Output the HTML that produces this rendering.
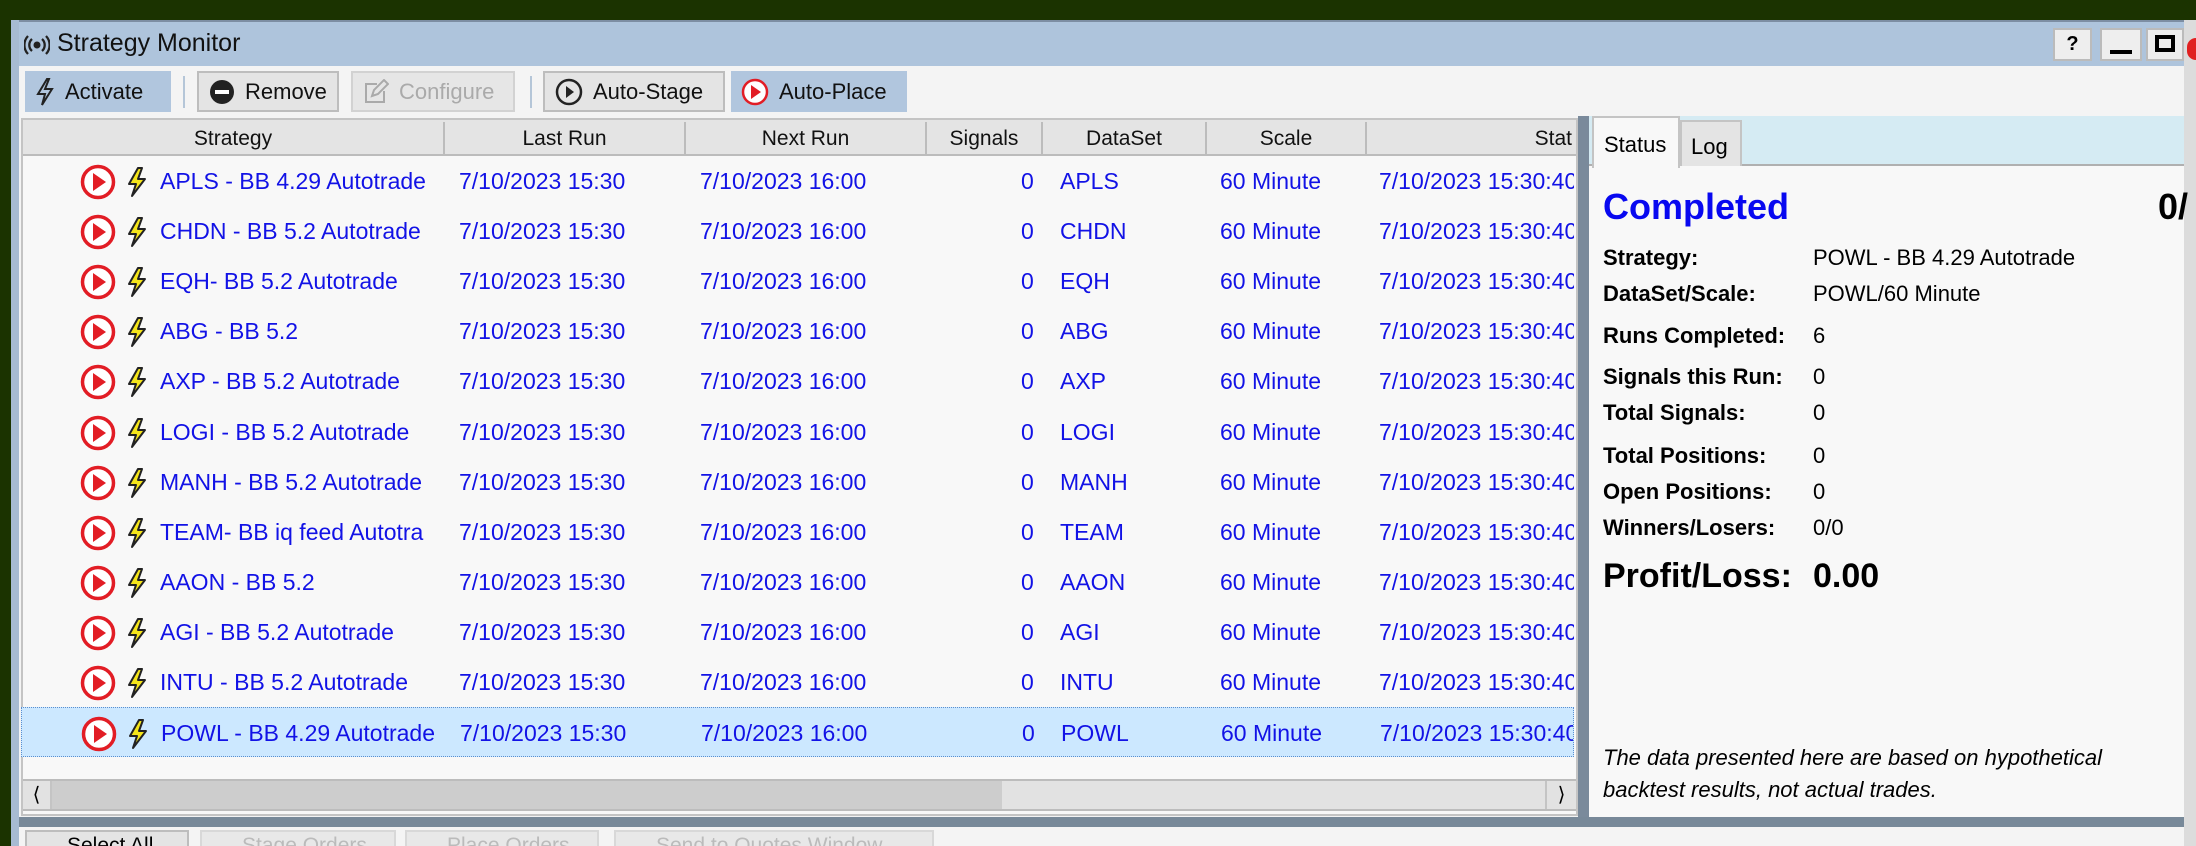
<!DOCTYPE html>
<html><head><meta charset="utf-8"><style>
*{margin:0;padding:0;box-sizing:border-box}
html,body{width:2196px;height:846px;overflow:hidden}
body{background:#1b3300;font-family:"Liberation Sans",sans-serif;position:relative}
.a{position:absolute}
.btn{position:absolute;top:71px;height:41px;font-size:22px;color:#111;display:flex;align-items:center;padding-left:10px;gap:10px}
.hd{position:absolute;top:122px;height:34px;font-size:21px;color:#111;text-align:center;line-height:34px;border-right:2px solid #bcbcbc}
.row{position:absolute;left:21px;width:1553px;height:50px;font-size:23px;color:#1212e6;overflow:hidden}
.row span{position:absolute;top:0;line-height:50px;white-space:nowrap}
.lbl{position:absolute;left:1603px;font-size:22px;font-weight:bold;color:#000}
.val{position:absolute;left:1813px;font-size:22px;color:#000}
.bb{position:absolute;top:830px;height:24px;font-size:21px;padding-left:40px;line-height:28px;overflow:hidden}
</style></head><body>
<div class="a" style="left:11px;top:20px;width:2185px;height:826px;background:#f4f4f4;border-top:2px solid #7d8ea3"></div>
<div class="a" style="left:11px;top:22px;width:2173px;height:44px;background:#aec4dc"></div>
<svg class="a" style="left:24px;top:34px" width="26" height="22" viewBox="0 0 26 22"><circle cx="13" cy="11" r="3.5" fill="#222"/><path d="M8 5a8 8 0 0 0 0 12M18 5a8 8 0 0 1 0 12M4 2a13 13 0 0 0 0 18M22 2a13 13 0 0 1 0 18" stroke="#222" stroke-width="2.3" fill="none"/></svg>
<div class="a" style="left:57px;top:29px;font-size:25px;color:#111">Strategy Monitor</div>
<div class="a" style="left:2053px;top:28px;width:39px;height:33px;background:#eee;border:2px solid #bbb;text-align:center;font-weight:bold;font-size:20px;line-height:29px">?</div>
<div class="a" style="left:2100px;top:28px;width:42px;height:33px;background:#eee;border:2px solid #bbb"><div class="a" style="left:8px;top:20px;width:22px;height:4px;background:#000"></div></div>
<div class="a" style="left:2146px;top:28px;width:38px;height:33px;background:#eee;border:2px solid #bbb"><div class="a" style="left:7px;top:5px;width:20px;height:17px;border:4px solid #000"></div></div>
<div class="a" style="left:2184px;top:20px;width:12px;height:826px;background:#dcdcdc"></div>
<div class="a" style="left:2187px;top:38px;width:9px;height:22px;background:#e02020;border-radius:9px 0 0 9px"></div>
<div class="btn" style="left:25px;width:146px;background:#b1c6de">
<svg width="20" height="30" viewBox="0 0 20 30"><path d="M12 2L3 17h7l-3 11 10-16h-7l4-10z" fill="none" stroke="#222" stroke-width="2"/></svg>Activate</div>
<div class="a" style="left:183px;top:76px;width:2px;height:32px;background:#b5c6d8"></div>
<div class="btn" style="left:197px;width:142px;background:#e4e4e4;border:2px solid #bdbdbd">
<svg width="26" height="26"><circle cx="13" cy="13" r="12" fill="#222"/><rect x="6" y="11" width="14" height="4" fill="#fff"/></svg>Remove</div>
<div class="btn" style="left:351px;width:164px;background:#e6e6e6;border:2px solid #d2d2d2;color:#aaa">
<svg width="26" height="26" viewBox="0 0 26 26"><path d="M14 5H3v18h18V12M9 17l2-6 10-10 4 4-10 10z" fill="none" stroke="#aaa" stroke-width="2"/></svg>Configure</div>
<div class="a" style="left:530px;top:76px;width:2px;height:32px;background:#b5c6d8"></div>
<div class="btn" style="left:543px;width:182px;background:#e4e4e4;border:2px solid #bdbdbd">
<svg width="28" height="28"><circle cx="14" cy="14" r="12" fill="none" stroke="#222" stroke-width="2.5"/><path d="M11 8l8 6-8 6z" fill="#222"/></svg>Auto-Stage</div>
<div class="btn" style="left:731px;width:176px;background:#b1c6de">
<svg width="28" height="28"><circle cx="14" cy="14" r="12" fill="#fff" stroke="#e21d25" stroke-width="2.5"/><path d="M10 7l10 7-10 7z" fill="#e21d25"/></svg>Auto-Place</div>
<div class="a" style="left:21px;top:118px;width:1557px;height:698px;background:#f8f8f8;border:2px solid #c4c4c4"></div>
<div class="a" style="left:23px;top:120px;width:1553px;height:36px;background:#e4e4e4;border-bottom:2px solid #bcbcbc"></div>
<div class="hd" style="left:23px;width:422px">Strategy</div>
<div class="hd" style="left:445px;width:241px">Last Run</div>
<div class="hd" style="left:686px;width:241px">Next Run</div>
<div class="hd" style="left:927px;width:116px">Signals</div>
<div class="hd" style="left:1043px;width:164px">DataSet</div>
<div class="hd" style="left:1207px;width:160px">Scale</div>
<div class="hd" style="left:1367px;width:209px;text-align:right;padding-right:4px;border:none">Stat</div>
<div id="rows"></div>
<div class="a" style="left:23px;top:779px;width:1553px;height:32px;background:#e2e2e2;border-top:2px solid #bcbcbc;border-bottom:2px solid #bcbcbc"></div>
<div class="a" style="left:52px;top:781px;width:950px;height:28px;background:#cdcdcd"></div>
<div class="a" style="left:23px;top:781px;width:29px;height:28px;border-right:2px solid #c4c4c4;font-size:20px;text-align:center;line-height:28px">&#10216;</div>
<div class="a" style="left:1545px;top:781px;width:31px;height:28px;border-left:2px solid #c4c4c4;font-size:20px;text-align:center;line-height:28px">&#10217;</div>
<div class="a" style="left:1578px;top:116px;width:11px;height:702px;background:#7a8a9b"></div>
<div class="a" style="left:18px;top:817px;width:2166px;height:10px;background:#788999"></div>
<div class="a" style="left:11px;top:20px;width:8px;height:826px;background:#a7bbd2"></div>
<div class="bb" style="left:25px;width:164px;background:#e4e4e4;border:2px solid #bdbdbd">Select All</div>
<div class="bb" style="left:200px;width:196px;background:#e8e8e8;border:2px solid #d8d8d8;color:#bbb">Stage Orders</div>
<div class="bb" style="left:405px;width:194px;background:#e8e8e8;border:2px solid #d8d8d8;color:#bbb">Place Orders</div>
<div class="bb" style="left:614px;width:320px;background:#e8e8e8;border:2px solid #d8d8d8;color:#bbb">Send to Quotes Window</div>
<div class="a" style="left:1589px;top:116px;width:595px;height:701px;background:#f8f8f8"></div>
<div class="a" style="left:1589px;top:116px;width:595px;height:50px;background:#d5ebf3;border-bottom:2px solid #b0b0b0"></div>
<div class="a" style="left:1592px;top:116px;width:88px;height:52px;background:#f8f8f8;border:2px solid #c4c4c4;border-bottom:none;font-size:22px;padding:14px 0 0 10px">Status</div>
<div class="a" style="left:1680px;top:120px;width:62px;height:46px;background:#e4e4e4;border:2px solid #c4c4c4;border-bottom:none;font-size:22px;padding:12px 0 0 9px">Log</div>
<div class="a" style="left:1603px;top:186px;font-size:36px;font-weight:bold;color:#0808f0">Completed</div>
<div class="a" style="left:2158px;top:186px;font-size:36px;font-weight:bold;color:#000">0/</div>
<div class="lbl" style="top:245px">Strategy:</div><div class="val" style="top:245px">POWL - BB 4.29 Autotrade</div>
<div class="lbl" style="top:281px">DataSet/Scale:</div><div class="val" style="top:281px">POWL/60 Minute</div>
<div class="lbl" style="top:323px">Runs Completed:</div><div class="val" style="top:323px">6</div>
<div class="lbl" style="top:364px">Signals this Run:</div><div class="val" style="top:364px">0</div>
<div class="lbl" style="top:400px">Total Signals:</div><div class="val" style="top:400px">0</div>
<div class="lbl" style="top:443px">Total Positions:</div><div class="val" style="top:443px">0</div>
<div class="lbl" style="top:479px">Open Positions:</div><div class="val" style="top:479px">0</div>
<div class="lbl" style="top:515px">Winners/Losers:</div><div class="val" style="top:515px">0/0</div>
<div class="a" style="left:1603px;top:557px;font-size:34px;font-weight:bold">Profit/Loss:</div>
<div class="a" style="left:1813px;top:557px;font-size:34px;font-weight:bold">0.00</div>
<div class="a" style="left:1603px;top:742px;font-size:22px;font-style:italic;line-height:32px">The data presented here are based on hypothetical<br>backtest results, not actual trades.</div>
<script>
var d=[["APLS - BB 4.29 Autotrade","APLS"],["CHDN - BB 5.2 Autotrade","CHDN"],["EQH- BB 5.2 Autotrade","EQH"],["ABG - BB 5.2","ABG"],["AXP - BB 5.2 Autotrade","AXP"],["LOGI - BB 5.2 Autotrade","LOGI"],["MANH - BB 5.2 Autotrade","MANH"],["TEAM- BB iq feed Autotra","TEAM"],["AAON - BB 5.2","AAON"],["AGI - BB 5.2 Autotrade","AGI"],["INTU - BB 5.2 Autotrade","INTU"],["POWL - BB 4.29 Autotrade","POWL"]];
var h="";d.forEach(function(r,i){var t=156+i*50.1;var sel=i==11;
h+='<div class="row" style="top:'+t+'px;'+(sel?'background:#cce8ff;border:1px dotted #5a8fd0;':'')+'">'+
'<svg style="position:absolute;left:59px;top:8px" width="36" height="36"><circle cx="18" cy="18" r="15.5" fill="#fff" stroke="#e21d25" stroke-width="3.5"/><path d="M13 9l13 9-13 9z" fill="#e21d25"/></svg>'+
'<svg style="position:absolute;left:104px;top:10px" width="24" height="32" viewBox="0 0 24 32"><path d="M13 2L4 18h7l-4 12 13-17h-7l4-11z" fill="#f5e51a" stroke="#222" stroke-width="2" stroke-linejoin="round"/></svg>'+
'<span style="left:139px">'+r[0]+'</span><span style="left:438px">7/10/2023 15:30</span><span style="left:679px">7/10/2023 16:00</span><span style="left:1000px">0</span><span style="left:1039px">'+r[1]+'</span><span style="left:1199px">60 Minute</span><span style="left:1358px">7/10/2023 15:30:40</span></div>';});
document.getElementById("rows").innerHTML=h;
</script>
</body></html>
